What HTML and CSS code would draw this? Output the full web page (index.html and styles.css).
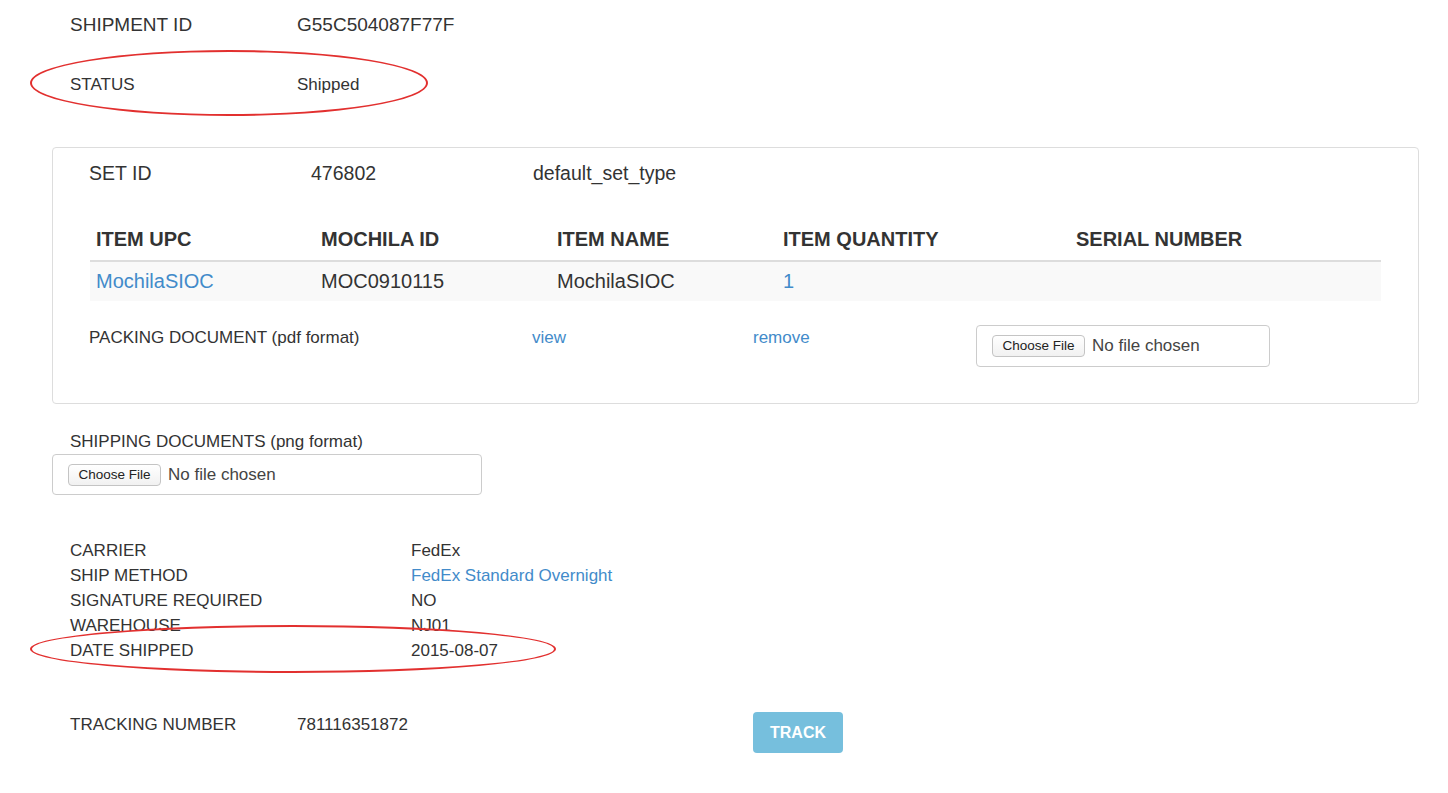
FILE: index.html
```html
<!DOCTYPE html>
<html lang="en">
<head>
    <meta charset="UTF-8">
    <meta name="viewport" content="width=device-width, initial-scale=1.0">
    <title>Shipment</title>
    <link rel="stylesheet" href="styles.css">
</head>
<body>
    <div class="page">
        <div class="head-row shipment-row">
            <span class="head-label">SHIPMENT ID</span>
            <span>G55C504087F77F</span>
        </div>
        <div class="head-row status-row">
            <span class="head-label">STATUS</span>
            <span>Shipped</span>
            <span class="circle circle-status"></span>
        </div>

        <div class="set-panel">
            <div class="set-row">
                <span class="set-col">SET ID</span>
                <span class="set-col">476802</span>
                <span>default_set_type</span>
            </div>
            <table class="items">
                <colgroup>
                    <col class="c1"><col class="c2"><col class="c3"><col class="c4"><col>
                </colgroup>
                <thead>
                    <tr>
                        <th>ITEM UPC</th>
                        <th>MOCHILA ID</th>
                        <th>ITEM NAME</th>
                        <th>ITEM QUANTITY</th>
                        <th>SERIAL NUMBER</th>
                    </tr>
                </thead>
                <tbody>
                    <tr>
                        <td><a href="#">MochilaSIOC</a></td>
                        <td>MOC0910115</td>
                        <td>MochilaSIOC</td>
                        <td><a href="#">1</a></td>
                        <td></td>
                    </tr>
                </tbody>
            </table>
            <div class="packing-row">
                <span class="pk-label">PACKING DOCUMENT (pdf format)</span>
                <a class="pk-view" href="#">view</a>
                <a class="pk-remove" href="#">remove</a>
                <div class="file-box file-box-small">
                    <span class="file-btn">Choose File</span>
                    <span class="file-name">No file chosen</span>
                </div>
            </div>
        </div>

        <div class="ship-docs-label">SHIPPING DOCUMENTS (png format)</div>
        <div class="file-box file-box-wide">
            <span class="file-btn">Choose File</span>
            <span class="file-name">No file chosen</span>
        </div>

        <div class="details">
            <div class="detail-row"><span class="d-label">CARRIER</span><span>FedEx</span></div>
            <div class="detail-row"><span class="d-label">SHIP METHOD</span><a href="#">FedEx Standard Overnight</a></div>
            <div class="detail-row"><span class="d-label">SIGNATURE REQUIRED</span><span>NO</span></div>
            <div class="detail-row"><span class="d-label">WAREHOUSE</span><span>NJ01</span></div>
            <div class="detail-row date-row">
                <span class="d-label">DATE SHIPPED</span><span>2015-08-07</span>
                <span class="circle circle-date"></span>
            </div>
        </div>

        <div class="tracking-row">
            <span class="head-label">TRACKING NUMBER</span>
            <span class="tr-value">781116351872</span>
            <button class="track-btn" type="button">TRACK</button>
        </div>
    </div>
</body>
</html>
```

FILE: styles.css
```css
*{
    margin: 0;
    padding: 0;
    box-sizing: border-box;
}
body{
    font-family: "Liberation Sans", Arial, sans-serif;
    color: #333;
    background-color: #fff;
    font-size: 17px;
}
a{
    color: #428bca;
    text-decoration: none;
}
.page{
    width: 1448px;
    height: 793px;
    overflow: hidden;
}

/* top rows */
.head-row{
    display: flex;
    align-items: center;
    padding-left: 70px;
    position: relative;
}
.head-label{
    width: 227px;
}
.shipment-row{
    height: 50px;
    font-size: 19px;
}
.status-row{
    height: 70px;
}
.circle{
    position: absolute;
    border: 2px solid #e2302f;
    border-radius: 50%;
}
.circle-status{
    left: 30px;
    top: 0;
    width: 398px;
    height: 66px;
}

/* set panel */
.set-panel{
    margin: 27px 29px 0 52px;
    height: 257px;
    border: 1px solid #ddd;
    border-radius: 4px;
    padding: 0 36px 0 36px;
}
.set-row{
    height: 50px;
    display: flex;
    align-items: center;
    font-size: 19.5px;
}
.set-col{
    width: 222px;
}
.items{
    margin: 23px 0 0 1px;
    width: 1291px;
    border-collapse: collapse;
    table-layout: fixed;
    font-size: 20px;
}
.items .c1{ width: 225px; }
.items .c2{ width: 236px; }
.items .c3{ width: 226px; }
.items .c4{ width: 293px; }
.items th{
    text-align: left;
    font-weight: bold;
    height: 40px;
    padding: 0 6px 2px;
    border-bottom: 2px solid #ddd;
    vertical-align: middle;
}
.items td{
    height: 40px;
    padding: 0 6px;
    background-color: #f9f9f9;
    vertical-align: middle;
}
.packing-row{
    display: flex;
    align-items: flex-start;
    margin-top: 24px;
    line-height: 26px;
}
.pk-label{
    width: 443px;
}
.pk-view{
    width: 221px;
}
.pk-remove{
    width: 223px;
}

/* fake file inputs */
.file-box{
    border: 1px solid #ccc;
    border-radius: 4px;
    display: flex;
    align-items: center;
    background-color: #fff;
}
.file-box-small{
    width: 294px;
    height: 42px;
    padding: 0 0 0 15px;
}
.file-box-wide{
    width: 430px;
    height: 41px;
    margin-left: 52px;
    padding: 0 0 0 15px;
    margin-top: 2px;
}
.file-btn{
    display: inline-block;
    height: 22px;
    line-height: 20px;
    width: 93px;
    text-align: center;
    font-size: 13.5px;
    color: #222;
    border: 1px solid #c4c4c4;
    border-radius: 4px;
    background: linear-gradient(#fff, #f1f1f1);
    margin-right: 7px;
}
.file-name{
    font-size: 17px;
    color: #444;
}

/* shipping docs */
.ship-docs-label{
    padding-left: 70px;
    margin-top: 28px;
    line-height: 20px;
}

/* carrier details */
.details{
    margin-top: 43px;
}
.detail-row{
    display: flex;
    height: 25px;
    line-height: 25px;
    padding-left: 70px;
    position: relative;
}
.d-label{
    width: 341px;
}
.circle-date{
    left: 30px;
    top: -13px;
    width: 526px;
    height: 48px;
}

/* tracking */
.tracking-row{
    display: flex;
    align-items: flex-start;
    padding-left: 70px;
    margin-top: 49px;
    line-height: 26px;
}
.tr-value{
    width: 456px;
}
.track-btn{
    width: 90px;
    height: 41px;
    border: none;
    border-radius: 4px;
    background-color: #76bfdd;
    color: #fff;
    font-family: "Liberation Sans", Arial, sans-serif;
    font-weight: bold;
    font-size: 16px;
}
```
